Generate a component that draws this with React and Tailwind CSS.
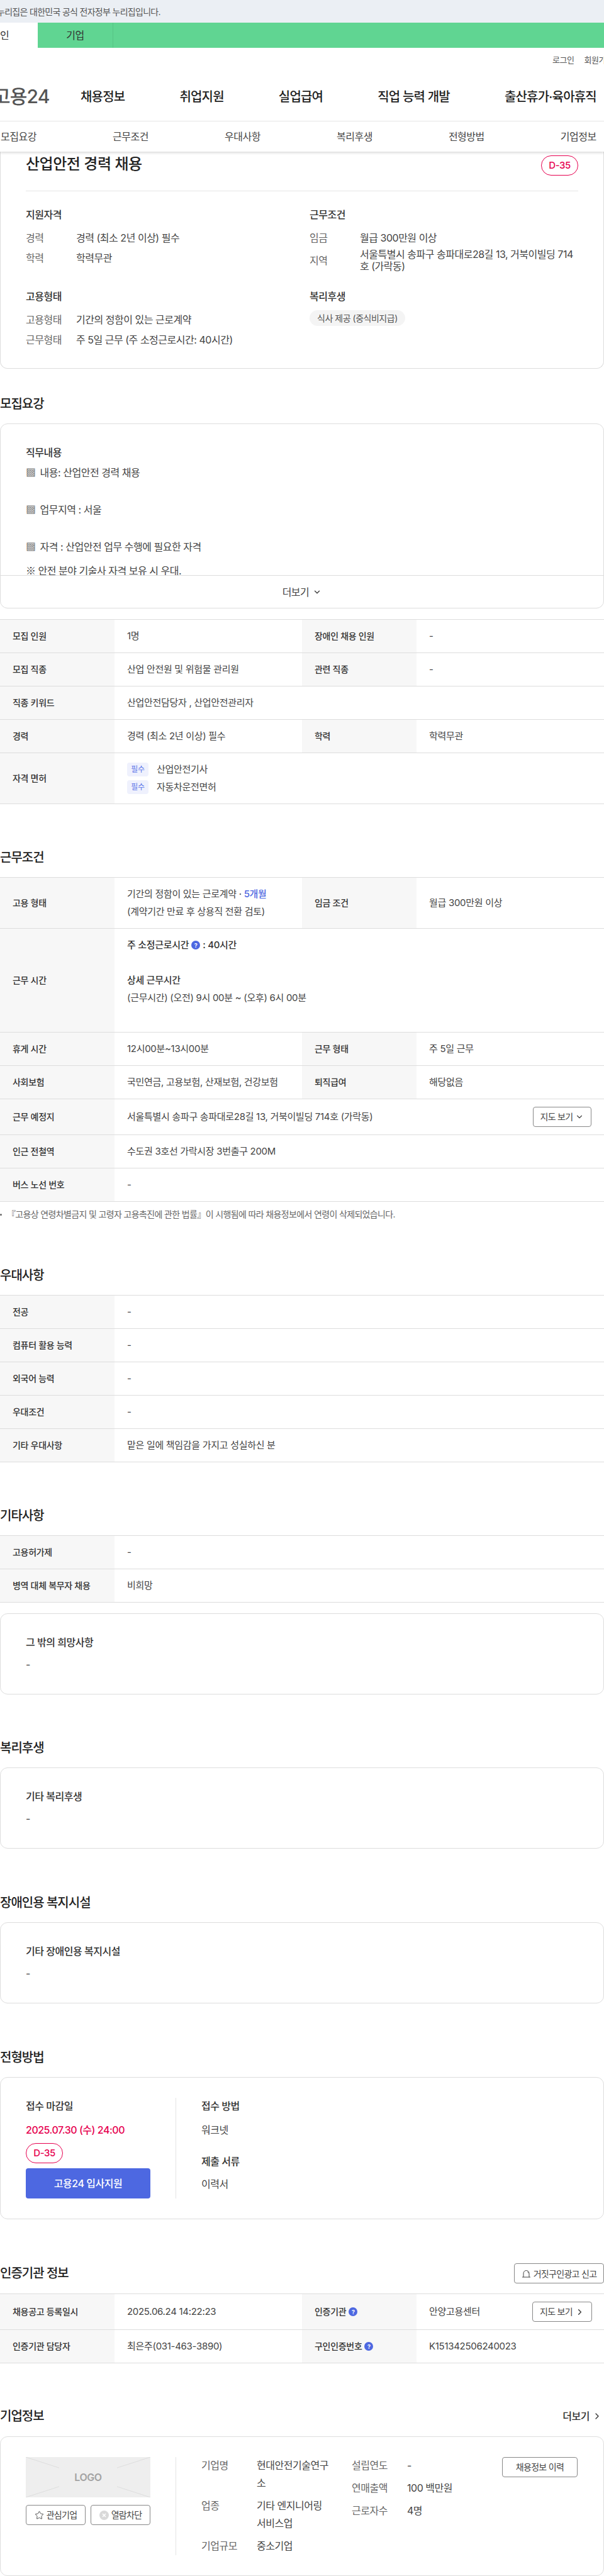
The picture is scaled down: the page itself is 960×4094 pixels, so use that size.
import React from 'react';
import { ChevronDown, ChevronRight, Star } from 'lucide-react';

function Heading({ children, className = '' }) {
  return <h2 className={`text-[20px] leading-[28px] font-medium text-[#222] tracking-[-0.05em] ${className}`}>{children}</h2>;
}

function Help() {
  return (
    <span className="inline-flex items-center justify-center w-[14px] h-[14px] rounded-full bg-[#4d68e1] text-white text-[9px] font-bold leading-none align-middle mx-[4px]">?</span>
  );
}

function Th({ children }) {
  return (
    <div className="w-[182px] shrink-0 bg-[#f7f7f7] pl-5 flex items-center text-[14px] font-medium text-[#333]">{children}</div>
  );
}

function Td({ children, className = '' }) {
  return <div className={`px-[20px] py-3 flex-1 min-w-0 text-[#444] ${className}`}>{children}</div>;
}

function Row({ items }) {
  return (
    <div className="flex border-b border-[#ddd] text-[15px] leading-[28px] tracking-[-0.02em]">
      {items.map(([k, v], i) => (
        <React.Fragment key={i}>
          <Th>{k}</Th>
          <Td className={items.length === 2 ? 'w-[298px] flex-none' : ''}>{v}</Td>
        </React.Fragment>
      ))}
    </div>
  );
}

function Table({ children }) {
  return <div className="border-t border-[#ddd]">{children}</div>;
}

function Card({ children, className = '' }) {
  return <div className={`border border-[#ddd] rounded-[12px] bg-white ${className}`}>{children}</div>;
}

function TextCard({ title, className = '' }) {
  return (
    <Card className={`px-10 pt-8 pb-[34px] ${className}`}>
      <p className="text-[16px] leading-[26px] font-medium text-[#333]">{title}</p>
      <p className="mt-[9px] text-[16px] leading-[26px] text-[#444]">-</p>
    </Card>
  );
}

function Pill() {
  return (
    <span className="inline-flex items-center justify-center w-[59px] h-[32px] rounded-full border border-[#e6004f] text-[#e6004f] text-[15px] font-medium bg-white">D-35</span>
  );
}

function SummaryRow({ k, children }) {
  return (
    <div className="flex items-center min-h-[32px] text-[16px]">
      <span className="w-[80px] shrink-0 text-[#666]">{k}</span>
      <span className="leading-[19px] py-[1px] text-[#444] break-all">{children}</span>
    </div>
  );
}

function Tag() {
  return <span className="inline-flex items-center justify-center w-[34px] h-[22px] rounded-[4px] bg-[#eff1fd] text-[#5d76e8] text-[12px] mr-[13px]">필수</span>;
}

function OutlineBtn({ children, className = '' }) {
  return (
    <button className={`inline-flex items-center justify-center h-[32px] border border-[#888] rounded-[4px] bg-white text-[14px] tracking-[-0.05em] text-[#444] ${className}`}>{children}</button>
  );
}

function Hatch({ children }) {
  return <span className="font-['Noto_Sans_CJK_KR'] text-[#666] mr-[3px]">{children}</span>;
}

export default function App() {
  return (
    <div className="w-[960px] h-[4094px] overflow-hidden bg-white tracking-[-0.03em] font-['Inter','Noto_Sans_CJK_KR',sans-serif]">
      <header className="relative z-10 bg-white shadow-[0_2px_4px_rgba(0,0,0,0.15)]">
        <div className="h-[36px] bg-[#ebeff4] flex items-center text-[14px] tracking-[-0.05em] text-[#555] -ml-[5px]">누리집은 대한민국 공식 전자정부 누리집입니다.</div>
        <div className="h-[40px] bg-[#60d592] flex text-[16px] text-[#333]">
          <div className="w-[60px] bg-white flex items-center"><span>인</span></div>
          <div className="w-[120px] flex items-center justify-center border-r border-[#57c585]"><span>기업</span></div>
        </div>
        <div className="h-[39px] flex items-center pl-[878px] text-[13px] text-[#555] gap-4 whitespace-nowrap pt-[1px]">
          <span>로그인</span>
          <span>회원가입</span>
        </div>
        <div className="h-[78px] flex items-center whitespace-nowrap font-medium text-[20px] text-[#222] tracking-[-0.04em] border-b border-[#e5e5e5]">
          <span className="w-[127px] -ml-[11px] shrink-0 text-[30px] text-[#555] font-medium">고용24</span>
          <div className="flex gap-[87px] ml-[12px]">
            <span>채용정보</span>
            <span>취업지원</span>
            <span>실업급여</span>
            <span>직업 능력 개발</span>
            <span>출산휴가·육아휴직</span>
          </div>
        </div>
        <div className="h-[48px] flex items-center text-[16px] text-[#444] whitespace-nowrap pl-[1px] gap-[121px]">
          <span>모집요강</span>
          <span>근무조건</span>
          <span>우대사항</span>
          <span>복리후생</span>
          <span>전형방법</span>
          <span>기업정보</span>
        </div>
      </header>

      <main>
        <div className="border border-t-0 border-[#ddd] rounded-b-[12px] px-10 pt-[6px] pb-[29px]">
          <div className="flex justify-between pb-6 border-b border-[#e5e5e5]">
            <h1 className="text-[24px] leading-[28px] font-medium text-[#222]">산업안전 경력 채용</h1>
            <Pill />
          </div>
          <div className="grid grid-cols-2 gap-x-6 gap-y-6 mt-6">
            <div>
              <h3 className="text-[16px] leading-[26px] font-medium text-[#333] mb-2">지원자격</h3>
              <SummaryRow k="경력">경력 (최소 2년 이상) 필수</SummaryRow>
              <SummaryRow k="학력">학력무관</SummaryRow>
            </div>
            <div>
              <h3 className="text-[16px] leading-[26px] font-medium text-[#333] mb-2">근무조건</h3>
              <SummaryRow k="임금">월급 300만원 이상</SummaryRow>
              <SummaryRow k="지역">서울특별시 송파구 송파대로28길 13, 거북이빌딩 714호 (가락동)</SummaryRow>
            </div>
            <div>
              <h3 className="text-[16px] leading-[26px] font-medium text-[#333] mb-2">고용형태</h3>
              <SummaryRow k="고용형태">기간의 정함이 있는 근로계약</SummaryRow>
              <SummaryRow k="근무형태">주 5일 근무 (주 소정근로시간: 40시간)</SummaryRow>
            </div>
            <div>
              <h3 className="text-[16px] leading-[26px] font-medium text-[#333] mb-[9px]">복리후생</h3>
              <span className="inline-flex items-center h-[25px] px-3 rounded-full bg-[#f4f4f4] text-[14px] text-[#555]">식사 제공 (중식비지급)</span>
            </div>
          </div>
        </div>

        <Heading className="mt-[42px] mb-[17px]">모집요강</Heading>
        <Card>
          <div className="h-[240px] overflow-hidden px-10 pt-8 text-[16px] text-[#444] leading-[29px]">
            <p className="leading-[26px] font-medium text-[#333] mb-1">직무내용</p>
            <p><Hatch>▩</Hatch> 내용: 산업안전 경력 채용</p>
            <p className="mt-[29px]"><Hatch>▩</Hatch> 업무지역 : 서울</p>
            <p className="mt-[29px]"><Hatch>▩</Hatch> 자격 : 산업안전 업무 수행에 필요한 자격</p>
            <p className="mt-[8px]"><span className="font-['Noto_Sans_CJK_KR']">※</span> 안전 분야 기술사 자격 보유 시 우대.</p>
          </div>
          <div className="h-[52px] border-t border-[#ddd] flex items-center justify-center text-[16px] text-[#444]">
            더보기 <ChevronDown className="w-[14px] h-[14px] ml-[6px]" strokeWidth={2.5} />
          </div>
        </Card>

        <div className="mt-[17px]">
          <Table>
            <Row items={[['모집 인원', '1명'], ['장애인 채용 인원', '-']]} />
            <Row items={[['모집 직종', '산업 안전원 및 위험물 관리원'], ['관련 직종', '-']]} />
            <Row items={[['직종 키워드', '산업안전담당자 , 산업안전관리자']]} />
            <Row items={[['경력', '경력 (최소 2년 이상) 필수'], ['학력', '학력무관']]} />
            <Row items={[['자격 면허', (
              <>
                <div className="flex items-center"><Tag />산업안전기사</div>
                <div className="flex items-center"><Tag />자동차운전면허</div>
              </>
            )]]} />
          </Table>
        </div>

        <Heading className="mt-[71px] mb-[17px]">근무조건</Heading>
        <Table>
          <Row items={[
            ['고용 형태', <>기간의 정함이 있는 근로계약 · <span className="text-[#4d68e1] font-medium">5개월</span><br />(계약기간 만료 후 상용직 전환 검토)</>],
            ['임금 조건', <div className="h-[56px] flex items-center">월급 300만원 이상</div>],
          ]} />
          <Row items={[['근무 시간', (
            <>
              <p className="font-medium text-[#333] flex items-center">주 소정근로시간<Help />: 40시간</p>
              <p>&nbsp;</p>
              <p className="font-medium text-[#333]">상세 근무시간</p>
              <p>(근무시간) (오전) 9시 00분 ~ (오후) 6시 00분</p>
              <p>&nbsp;</p>
            </>
          )]]} />
          <Row items={[['휴게 시간', '12시00분~13시00분'], ['근무 형태', '주 5일 근무']]} />
          <Row items={[['사회보험', '국민연금, 고용보험, 산재보험, 건강보험'], ['퇴직급여', '해당없음']]} />
          <Row items={[['근무 예정지', (
            <div className="flex items-center justify-between h-[32px]">
              <span>서울특별시 송파구 송파대로28길 13, 거북이빌딩 714호 (가락동)</span>
              <OutlineBtn className="w-[93px]">지도 보기<ChevronDown className="w-[14px] h-[14px] ml-[4px]" /></OutlineBtn>
            </div>
          )]]} />
          <Row items={[['인근 전철역', '수도권 3호선 가락시장 3번출구 200M']]} />
          <Row items={[['버스 노선 번호', '-']]} />
        </Table>
        <p className="mt-[10px] text-[14px] leading-[20px] text-[#666] tracking-[-0.046em] flex items-center">
          <span className="w-[3px] h-[3px] rounded-full bg-[#666] mr-[8px]" />『고용상 연령차별금지 및 고령자 고용촉진에 관한 법률』이 시행됨에 따라 채용정보에서 연령이 삭제되었습니다.
        </p>

        <Heading className="mt-[73px] mb-[17px]">우대사항</Heading>
        <Table>
          <Row items={[['전공', '-']]} />
          <Row items={[['컴퓨터 활용 능력', '-']]} />
          <Row items={[['외국어 능력', '-']]} />
          <Row items={[['우대조건', '-']]} />
          <Row items={[['기타 우대사항', '맡은 일에 책임감을 가지고 성실하신 분']]} />
        </Table>

        <Heading className="mt-[71px] mb-[17px]">기타사항</Heading>
        <Table>
          <Row items={[['고용허가제', '-']]} />
          <Row items={[['병역 대체 복무자 채용', '비희망']]} />
        </Table>
        <TextCard title="그 밖의 희망사항" className="mt-[17px]" />

        <Heading className="mt-[71px] mb-[17px]">복리후생</Heading>
        <TextCard title="기타 복리후생" />

        <Heading className="mt-[72px] mb-[17px]">장애인용 복지시설</Heading>
        <TextCard title="기타 장애인용 복지시설" />

        <Heading className="mt-[72px] mb-[17px]">전형방법</Heading>
        <Card className="px-10 py-8 flex text-[16px] leading-[26px]">
          <div className="w-[239px] pr-10 border-r border-[#e5e5e5] shrink-0">
            <p className="font-medium text-[#333]">접수 마감일</p>
            <p className="mt-3 font-medium text-[#e6004f]">2025.07.30 (수) 24:00</p>
            <div className="mt-2 flex"><Pill /></div>
            <button className="mt-2 w-full h-[48px] rounded-[4px] bg-[#4d68e1] text-white font-medium">고용24 입사지원</button>
          </div>
          <div className="pl-10">
            <p className="font-medium text-[#333]">접수 방법</p>
            <p className="mt-3 text-[#444]">워크넷</p>
            <p className="mt-6 font-medium text-[#333]">제출 서류</p>
            <p className="mt-[10px] text-[#444]">이력서</p>
          </div>
        </Card>

        <div className="mt-[70px] mb-[16px] flex items-center justify-between h-[32px]">
          <Heading>인증기관 정보</Heading>
          <OutlineBtn className="w-[143px] rounded-[4px]">
            <svg className="w-[15px] h-[15px] mr-[4px]" viewBox="0 0 15 15" fill="none" stroke="#444" strokeWidth="1">
              <path d="M3 13V7a4.5 4.5 0 0 1 9 0v6M1 13h13M9.5 4.5a2 2 0 0 1 1 2" />
            </svg>
            거짓구인광고 신고
          </OutlineBtn>
        </div>
        <Table>
          <Row items={[
            ['채용공고 등록일시', <div className="h-[32px] flex items-center">2025.06.24 14:22:23</div>],
            [<>인증기관<Help /></>, (
              <div className="flex items-center justify-between h-[32px] -mr-[1px]">
                <span>안양고용센터</span>
                <OutlineBtn className="w-[95px]">지도 보기<ChevronRight className="w-[15px] h-[15px] ml-[4px]" strokeWidth={2.5} /></OutlineBtn>
              </div>
            )],
          ]} />
          <Row items={[
            ['인증기관 담당자', '최은주(031-463-3890)'],
            [<>구인인증번호<Help /></>, 'K151342506240023'],
          ]} />
        </Table>

        <div className="mt-[70px] mb-[18px] flex items-center justify-between h-[28px]">
          <Heading>기업정보</Heading>
          <span className="flex items-center text-[16px] font-medium text-[#333] mr-[3px]">더보기<ChevronRight className="w-[16px] h-[16px] ml-[4px]" /></span>
        </div>
        <Card className="px-10 py-8 flex text-[16px] leading-[28px] text-[#444]">
          <div className="w-[239px] pr-10 border-r border-[#e5e5e5] shrink-0">
            <div className="relative h-[64px] bg-[#eee] flex items-center justify-center overflow-hidden">
              <svg className="absolute inset-0 w-full h-full" viewBox="0 0 199 64" preserveAspectRatio="none">
                <path d="M0 0L199 64M199 0L0 64" stroke="#ddd" strokeWidth="1" />
              </svg>
              <span className="relative px-[24px] py-[8px] bg-[#eee] text-[#a3a3a3] font-semibold text-[16px]">LOGO</span>
            </div>
            <div className="mt-3 flex gap-2">
              <OutlineBtn className="flex-1"><Star className="w-[15px] h-[15px] mr-[4px]" strokeWidth={1.5} />관심기업</OutlineBtn>
              <OutlineBtn className="flex-1">
                <svg className="w-[15px] h-[15px] mr-[4px]" viewBox="0 0 15 15">
                  <circle cx="7.5" cy="7.5" r="7.5" fill="#d9d9d9" />
                  <path d="M5 5l5 5M10 5l-5 5" stroke="#fff" strokeWidth="1.5" />
                </svg>
                열람차단
              </OutlineBtn>
            </div>
          </div>
          <div className="pl-10 flex-1 flex h-[156px]">
            <div className="w-[239px] -mt-[1px] flex flex-col gap-2">
              <div className="flex"><span className="w-[88px] shrink-0 text-[#666]">기업명</span><span className="w-[115px]">현대안전기술연구소</span></div>
              <div className="flex"><span className="w-[88px] shrink-0 text-[#666]">업종</span><span className="w-[115px]">기타 엔지니어링 서비스업</span></div>
              <div className="flex"><span className="w-[88px] shrink-0 text-[#666]">기업규모</span><span>중소기업</span></div>
            </div>
            <div className="w-[239px] -mt-[1px] flex flex-col gap-2">
              <div className="flex"><span className="w-[88px] shrink-0 text-[#666]">설립연도</span><span>-</span></div>
              <div className="flex"><span className="w-[88px] shrink-0 text-[#666]">연매출액</span><span>100 백만원</span></div>
              <div className="flex"><span className="w-[88px] shrink-0 text-[#666]">근로자수</span><span>4명</span></div>
            </div>
            <OutlineBtn className="w-[120px] shrink-0">채용정보 이력</OutlineBtn>
          </div>
        </Card>
      </main>
    </div>
  );
}
